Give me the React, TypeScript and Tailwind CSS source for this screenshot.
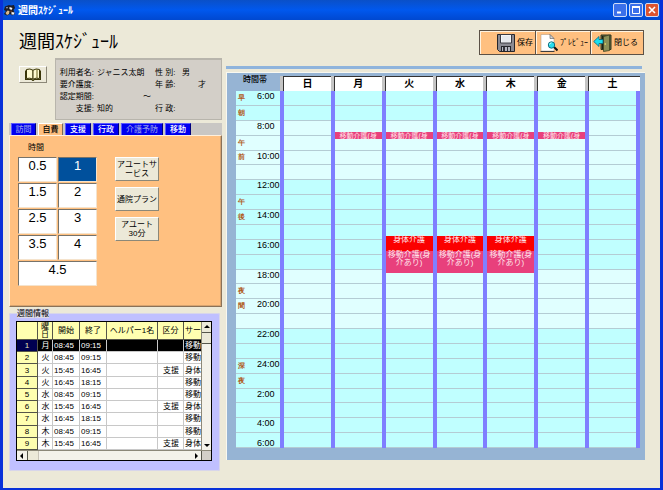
import { useState } from 'react';
import clsx from 'clsx';

/* ------------------------------------------------------------------ */
/*  Data                                                               */
/* ------------------------------------------------------------------ */

const DAYS = ['日', '月', '火', '水', '木', '金', '土'];
const FIRST_HOUR = 6;
const HOURS = Array.from({ length: 24 }, (_, i) => i);

const BAND_CHARS: Record<number, string> = {
  0: '早', 1: '朝', 3: '午', 4: '前', 7: '午', 8: '後', 13: '夜', 14: '間', 18: '深', 19: '夜',
};

const TABS = [
  { id: '訪問', dim: true, width: 'w-[25px]' },
  { id: '自費', dim: false, width: 'w-[25px]' },
  { id: '支援', dim: false, width: 'w-[26px]' },
  { id: '行政', dim: false, width: 'w-[26px]' },
  { id: '介護予防', dim: true, width: 'w-[42px]' },
  { id: '移動', dim: false, width: 'w-[26px]' },
];

const DURATIONS = ['0.5', '1', '1.5', '2', '2.5', '3', '3.5', '4', '4.5'];

const ROWS = [
  { day: '月', start: '08:45', end: '09:15', kind: '', service: '移動' },
  { day: '火', start: '08:45', end: '09:15', kind: '', service: '移動' },
  { day: '火', start: '15:45', end: '16:45', kind: '支援', service: '身体' },
  { day: '火', start: '16:45', end: '18:15', kind: '', service: '移動' },
  { day: '水', start: '08:45', end: '09:15', kind: '', service: '移動' },
  { day: '水', start: '15:45', end: '16:45', kind: '支援', service: '身体' },
  { day: '水', start: '16:45', end: '18:15', kind: '', service: '移動' },
  { day: '木', start: '08:45', end: '09:15', kind: '', service: '移動' },
  { day: '木', start: '15:45', end: '16:45', kind: '支援', service: '身体' },
];

type Visit = { from: number; to: number; label: string; color: string };

// Half an hour leaves room for one line only
const MORNING: Visit = { from: 8.75, to: 9.25, label: '移動介護(身', color: 'bg-[#e8407c]' };
const BODY: Visit = { from: 15.75, to: 16.75, label: '身体介護', color: 'bg-[#fb0000]' };
const OUTING: Visit = { from: 16.75, to: 18.25, label: '移動介護(身介あり)', color: 'bg-[#e8407c]' };

const VISITS: Record<string, Visit[]> = {
  月: [MORNING],
  火: [MORNING, BODY, OUTING],
  水: [MORNING, BODY, OUTING],
  木: [MORNING, BODY, OUTING],
  金: [MORNING],
};

// Morning and evening rows are paler than the rest
const slotColor = (i: number) =>
  (i >= 2 && i < 6) || (i >= 12 && i < 16) ? 'bg-[#e0ffff]' : 'bg-[#c0ffff]';

const hourLabel = (i: number) => {
  const h = FIRST_HOUR + i;
  return `${h > 24 ? h - 24 : h}:00`;
};

/* ------------------------------------------------------------------ */
/*  Icons                                                              */
/* ------------------------------------------------------------------ */

function AppIcon() {
  return (
    <svg viewBox="0 0 12 12" className="size-3 shrink-0" aria-hidden="true">
      <path d="M1 2.500l4-1.500 2 .5 3-.5 1 3-1.500 2 1.500 4-3 1.500-2-1.500-3 1.500-3-1.500 2-3-2-1z" fill="#1c1c24" />
      <path d="M1.500 9l2-2.500 2 .5-.5 3-2 1z" fill="#d9b98c" />
      <path d="M5.500 3l3 1-1 2-2-1zM7.500 8l3 .5-.5 2H7.500z" fill="#f4f4f4" />
      <path d="M2 3h2l-1 2z" fill="#a9a9b4" />
      <path d="M6 7l1.500-.5v1.500z" fill="#c8622c" />
    </svg>
  );
}

function BookIcon() {
  return (
    <svg viewBox="0 0 18 13" className="h-[13px] w-[18px]" aria-hidden="true">
      <path d="M1 2.500h1.500V11H8l1 1 1-1h6V2.500h1V12h-6.500l-1 1h-1l-1-1H1z" fill="#3a3608" />
      <path d="M2.500 1.500Q6 .2 9 2.200v9Q6 9.500 2.500 10.500z" fill="#fffbd0" stroke="#3a3608" />
      <path d="M15.500 1.500Q12 .2 9 2.200v9q3-1.700 6.500-.7z" fill="#fffbd0" stroke="#3a3608" />
      <path d="M13 1v9" stroke="#6b6420" />
    </svg>
  );
}

function SaveIcon() {
  return (
    <svg viewBox="0 0 18 18" className="size-[18px] shrink-0" aria-hidden="true">
      <path d="M.5.5h17v17h-15l-2-2z" fill="#8a8a92" stroke="#26262c" />
      <path d="M3.500.5h11v8.500h-11z" fill="#f4f6f8" stroke="#3a3a42" />
      <path d="M5 3h8M5 5h8M5 7h8" stroke="#d9dce2" />
      <path d="M4 12h10v5.500H4z" fill="#24242a" />
      <path d="M5 13h8v4H5z" fill="#b4b6c0" />
      <path d="M6 13h2v4H6zM10 13h1v4h-1z" fill="#33333a" />
    </svg>
  );
}

function PreviewIcon() {
  return (
    <svg viewBox="0 0 18 18" className="size-[18px] shrink-0" aria-hidden="true">
      <path d="M1 .5h9l4 4V17H1z" fill="#fff" stroke="#a89078" strokeWidth=".5" />
      <path d="M.5 17.500h14" stroke="#3c3c3c" />
      <path d="M10 .5v4h4z" fill="#d5d5d5" stroke="#555" strokeWidth=".6" />
      <path d="M14 13l3.500 3.500" stroke="#101010" strokeWidth="2" />
      <circle cx="11.500" cy="11" r="3.200" fill="#25dcec" stroke="#136f80" />
      <path d="M9.500 10.500q.5-1.700 2-1.700" stroke="#d8ffff" fill="none" />
    </svg>
  );
}

function ExitIcon() {
  return (
    <svg viewBox="0 0 19 18" className="h-[18px] w-[19px] shrink-0" aria-hidden="true">
      <path d="M8 1h10v14.500H8z" fill="#5c6440" stroke="#33371f" />
      <path d="M9 2h3v13H9z" fill="#1f2213" />
      <path d="M10.500 2.500L16.500 1v15.500l-6 1z" fill="#8b8f57" stroke="#3e4224" strokeWidth=".8" />
      <circle cx="12.300" cy="10" r=".8" fill="#f2e86a" />
      <path d="M.7 7.500L6 2.500v3h4v4H6v3z" fill="#19dff0" stroke="#0b5f74" strokeWidth=".8" />
    </svg>
  );
}

function Arrow({ dir }: { dir: 'up' | 'down' | 'left' | 'right' }) {
  const d = {
    up: 'M4 2l3 3H1z',
    down: 'M4 6L1 3h6z',
    left: 'M2 4l3-3v6z',
    right: 'M6 4L3 1v6z',
  }[dir];
  return (
    <svg viewBox="0 0 8 8" className="size-2 shrink-0" aria-hidden="true">
      <path d={d} fill="#000" />
    </svg>
  );
}

/* ------------------------------------------------------------------ */
/*  Window chrome                                                      */
/* ------------------------------------------------------------------ */

const CHROME_BUTTON =
  'flex size-[14px] items-center justify-center rounded-xs border border-[#cfdcf8]';

function TitleBar() {
  return (
    <div className="flex h-5 items-center gap-0.5 bg-linear-to-b from-[#0a50c8] via-[#0058ee] to-[#0048d0] pr-px pl-px">
      <AppIcon />
      <span className="flex-1 text-[10px] font-bold text-white">週間ｽｹｼﾞｭｰﾙ</span>
      <div className="flex gap-0.5">
        <button className={clsx(CHROME_BUTTON, 'bg-[#3b70ea]')} aria-label="最小化">
          <svg viewBox="0 0 10 10" className="size-2.5"><path d="M2 7.500h4" stroke="#fff" strokeWidth="2" /></svg>
        </button>
        <button className={clsx(CHROME_BUTTON, 'bg-[#3b70ea]')} aria-label="最大化">
          <svg viewBox="0 0 10 10" className="size-2.5">
            <path d="M1.500 1.500h7v7h-7z" fill="none" stroke="#fff" />
            <path d="M1 2h8" stroke="#fff" strokeWidth="2" />
          </svg>
        </button>
        <button className={clsx(CHROME_BUTTON, 'bg-[#dc5430]')} aria-label="閉じる">
          <svg viewBox="0 0 10 10" className="size-2.5"><path d="M2 2l6 6M8 2L2 8" stroke="#fff" strokeWidth="1.600" /></svg>
        </button>
      </div>
    </div>
  );
}

const TOOL_BUTTON =
  'flex h-[25px] items-center gap-0.5 border border-[#5b5146] bg-[#ffc080] px-0.5 shadow-[inset_1px_1px_0_#fff3e0]';

function Header() {
  return (
    <header className="flex items-start justify-between pt-[10px] pr-4 pb-[3px] pl-4">
      <h1 className="text-[18px] leading-[25px] font-normal">週間ｽｹｼﾞｭｰﾙ</h1>
      <div className="flex">
        <button className={clsx(TOOL_BUTTON, 'w-[57px] justify-end')}>
          <SaveIcon />
          保存
        </button>
        <button className={clsx(TOOL_BUTTON, '-ml-px w-14 justify-end')}>
          <PreviewIcon />
          ﾌﾟﾚﾋﾞｭｰ
        </button>
        <button className={clsx(TOOL_BUTTON, '-ml-px w-[54px]')}>
          <ExitIcon />
          閉じる
        </button>
      </div>
    </header>
  );
}

/* ------------------------------------------------------------------ */
/*  Left column                                                        */
/* ------------------------------------------------------------------ */

const RAISED = 'border border-t-white border-l-white border-r-[#8c8878] border-b-[#8c8878]';
const SUNKEN = 'border border-t-[#77736a] border-l-[#77736a] border-r-[#f5e3cc] border-b-[#f5e3cc]';

function ClientInfo() {
  return (
    <div className="flex items-start gap-2 pl-[10px]">
      <button
        className={clsx(RAISED, 'mt-2 flex h-[17px] w-7 items-center justify-center bg-[#ece9d8]')}
        aria-label="利用者一覧"
      >
        <BookIcon />
      </button>
      <dl className="grid flex-1 grid-cols-[36px_1fr_24px_39px] gap-x-[3px] border border-t-2 border-[#b8b5ac] bg-[#d3cfc8] pt-[7px] pb-1 pl-0.5 leading-3 whitespace-nowrap">
        <dt className="text-right">利用者名:</dt>
        <dd>ジャニス太朗</dd>
        <dt>性 別:</dt>
        <dd>男</dd>
        <dt className="text-right">要介護度:</dt>
        <dd />
        <dt>年 齢:</dt>
        <dd className="pl-4">才</dd>
        <dt className="text-right">認定期間:</dt>
        <dd className="col-span-3 pl-[46px]">～</dd>
        <dt className="text-right">支援:</dt>
        <dd>知的</dd>
        <dt>行 政:</dt>
        <dd />
      </dl>
    </div>
  );
}

function ServicePanel() {
  const [tab, setTab] = useState('自費');
  const [duration, setDuration] = useState('1');

  return (
    <div className="mt-[3px]">
      <div role="tablist" className="flex gap-0.5 bg-[#c9c7c4] pl-0.5">
        {TABS.map((t) => (
          <button
            key={t.id}
            role="tab"
            aria-selected={t.id === tab}
            onClick={() => setTab(t.id)}
            className={clsx(
              'h-3 border border-b-0 leading-[10px] font-medium whitespace-nowrap',
              t.width,
              t.id === tab
                ? 'border-t-white border-r-[#7a6a58] border-l-white bg-[#ffc080] text-black'
                : 'border-t-[#5a5aff] border-r-[#00007a] border-l-[#5a5aff] bg-[#0000f0]',
              t.id !== tab && (t.dim ? 'text-[#8c94e8]' : 'text-white'),
            )}
          >
            {t.id}
          </button>
        ))}
      </div>
      <div
        role="tabpanel"
        className="flex gap-[18px] border border-t-[#fff0dc] border-r-[#8a7258] border-b-[#8a7258] border-l-[#fff0dc] bg-[#ffc080] pt-1.5 pb-5 pl-2 shadow-[inset_-1px_-1px_0_#d8a470]"
      >
        <div className="w-[79px]">
          <p className="pb-[3px] pl-2.5 leading-3">時間</p>
          <div className="grid grid-cols-2 gap-px">
            {DURATIONS.map((d) => (
              <button
                key={d}
                onClick={() => setDuration(d)}
                className={clsx(
                  SUNKEN,
                  'h-[25px] pb-2 font-[Liberation_Sans] text-[13px] leading-[15px] last:col-span-2',
                  d === duration ? 'bg-[#00509c] text-white' : 'bg-white',
                )}
              >
                {d}
              </button>
            ))}
          </div>
        </div>
        <div className="flex w-11 flex-col gap-1.5 pt-[15px]">
          {['アユートサービス', '通院プラン', 'アユート\n30分'].map((label) => (
            <button
              key={label}
              className={clsx(RAISED, 'h-6 bg-[#ece9d8] leading-[9px] break-all whitespace-pre-line')}
            >
              {label}
            </button>
          ))}
        </div>
      </div>
    </div>
  );
}

const TH = 'border-r border-b border-[#55554a] bg-[#ffffb0] p-0 font-normal overflow-hidden';
const TD = 'border-r border-b border-[#c8c8c8] p-0 pl-px overflow-hidden whitespace-nowrap';

function WeekTable() {
  const [selected, setSelected] = useState(0);

  return (
    <fieldset className="mt-0.5 mr-0.5 min-w-0 rounded-xs border border-[#d8d6ea] bg-[#c0c0ff] pt-[3px] pr-[7px] pb-[9px] pl-1.5">
      <legend className="ml-px bg-[#dcd9e6] leading-[9px]">週間情報</legend>
      <div className="border border-black bg-[#f4f2ea]">
        <div className="flex h-32">
          <div className="min-w-0 flex-1">
            <table className="h-full w-full table-fixed border-separate border-spacing-0 leading-[9px]">
              <thead>
                <tr>
                  <th className={clsx(TH, 'h-[18px] w-[21px]')} />
                  <th className={clsx(TH, 'w-[15px] leading-2')}>曜<br />日</th>
                  <th className={clsx(TH, 'w-[27px]')}>開始</th>
                  <th className={clsx(TH, 'w-[27px]')}>終了</th>
                  <th className={TH}>ヘルパー1名</th>
                  <th className={clsx(TH, 'w-[26px]')}>区分</th>
                  <th className={clsx(TH, 'w-[17px] border-r-0 pl-px text-left')}>サー</th>
                </tr>
              </thead>
              <tbody>
                {ROWS.map((r, i) => (
                  <tr
                    key={i}
                    onClick={() => setSelected(i)}
                    className={i === selected ? 'bg-black text-white' : 'bg-white'}
                  >
                    <th
                      className={clsx(
                        'border-r border-b border-[#55554a] p-0 font-[Liberation_Sans] font-normal',
                        i === selected ? 'bg-[#000050] text-[#e8e8b0]' : 'bg-[#ffffb0]',
                      )}
                    >
                      {i + 1}
                    </th>
                    <td className={clsx(TD, 'text-center')}>{r.day}</td>
                    <td className={clsx(TD, 'font-[Liberation_Sans]')}>{r.start}</td>
                    <td className={clsx(TD, 'font-[Liberation_Sans]')}>{r.end}</td>
                    <td className={TD} />
                    <td className={clsx(TD, 'text-center')}>{r.kind}</td>
                    <td className={clsx(TD, 'border-r-0')}>{r.service}</td>
                  </tr>
                ))}
              </tbody>
            </table>
          </div>
          <div className="flex w-2.5 flex-col border-l border-[#8c8878]">
            <button className="flex h-[11px] items-center justify-center border-b border-[#55554a] bg-[#ece9d8]" aria-label="上へ">
              <Arrow dir="up" />
            </button>
            <div className="h-[11px] border-b border-[#55554a] bg-[#ece9d8]" />
            <div className="flex-1" />
            <button className="flex h-[11px] items-center justify-center" aria-label="下へ"><Arrow dir="down" /></button>
          </div>
        </div>
        <div className="flex h-[10px] items-center justify-between border-t border-[#8c8878]">
          <div className="flex h-full">
            <button className="flex w-[11px] items-center justify-center border-r border-[#55554a]" aria-label="左へ"><Arrow dir="left" /></button>
            <div className="w-[11px] border-r border-[#c8c4b8] bg-[#ece9d8]" />
          </div>
          <div className="flex h-full">
            <button className="flex w-[11px] items-center justify-center" aria-label="右へ"><Arrow dir="right" /></button>
            <div className="w-2.5 border-l border-[#55554a] bg-[#d3cfc8]" />
          </div>
        </div>
      </div>
    </fieldset>
  );
}

/* ------------------------------------------------------------------ */
/*  Schedule                                                           */
/* ------------------------------------------------------------------ */

const COLUMNS = 'grid grid-cols-[44px_repeat(7,1fr)_4px]';
const SLOT = 'min-h-0 flex-1 border-b border-[#b4ccd4]';

function VisitBlock({ visit }: { visit: Visit }) {
  const top = ((visit.from - FIRST_HOUR) / 24) * 100;
  const height = ((visit.to - visit.from) / 24) * 100;
  const short = visit.to - visit.from < 1;
  return (
    <div
      className={clsx(
        'absolute inset-x-0 text-center break-all text-[#ffe4e8]',
        short ? 'text-[7px] leading-[7px]' : 'leading-2',
        visit.color,
      )}
      style={{ top: `${top}%`, height: `${height}%` }}
    >
      {visit.label}
    </div>
  );
}

function Schedule() {
  return (
    <section className="mb-[11px] flex min-w-0 flex-1 flex-col pt-2">
      <div className="mr-[3px] mb-[3px] h-[3px] bg-[#8fb4dc]" />
      <div className="flex flex-1 flex-col border-t border-l border-[#f8f8f0] bg-[#96b4d4] pt-[3px] pr-[5px] pb-3 pl-[9px]">
        <div className={COLUMNS}>
          <div className="pl-[7px] leading-2 font-medium">時間帯</div>
          {DAYS.map((d) => (
            <div key={d} className="bg-[#c4c4c4] pl-[3px]">
              <div className="border-t border-l border-[#333] bg-white text-center text-[10px] leading-[14px] font-bold">
                {d}
              </div>
            </div>
          ))}
          <div className="border-t border-[#333] bg-white" />
        </div>
        <div className={clsx(COLUMNS, 'min-h-[356px] flex-1')}>
          <div className="flex flex-col">
            {HOURS.map((i) => (
              <div key={i} className={clsx(SLOT, slotColor(i), 'flex font-[Liberation_Sans] whitespace-nowrap')}>
                <span className="w-[21px] self-center pl-0.5 text-[7px] leading-2 font-bold text-[#b05a20]">
                  {BAND_CHARS[i]}
                </span>
                {i % 2 === 0 && <span className="text-[9px] leading-[10px]">{hourLabel(i)}</span>}
                {i === 23 && <span className="self-end text-[9px] leading-[8px]">{hourLabel(24)}</span>}
              </div>
            ))}
          </div>
          {DAYS.map((d) => (
            <div key={d} className="flex border-l-4 border-[#7f7fff]">
              <div className="relative flex flex-1 flex-col">
                {HOURS.map((i) => (
                  <div key={i} className={clsx(SLOT, slotColor(i))} />
                ))}
                {VISITS[d]?.map((v) => <VisitBlock key={v.from} visit={v} />)}
              </div>
            </div>
          ))}
          <div className="bg-[#7f7fff]" />
        </div>
      </div>
    </section>
  );
}

export default function App() {
  return (
    <div className="flex min-h-screen flex-col border-x-[3px] border-b-[3px] border-[#0831d9] bg-[#ece9d8] font-['Liberation_Sans','Noto_Sans_CJK_JP',sans-serif] text-[8px] text-black">
      <TitleBar />
      <Header />
      <main className="flex flex-1 gap-1 pr-[15px] pb-[17px] pl-1.5">
        <div className="w-[213px] shrink-0">
          <ClientInfo />
          <ServicePanel />
          <WeekTable />
        </div>
        <Schedule />
      </main>
    </div>
  );
}
